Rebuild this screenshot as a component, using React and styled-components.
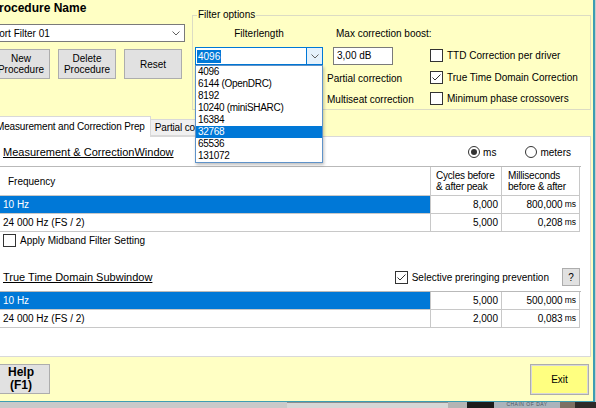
import React from 'react'
import styled, { createGlobalStyle } from 'styled-components'

const YELLOW = '#ffffc4'
const BLUE = '#0078d7'

const GlobalStyle = createGlobalStyle`
  html, body { margin: 0; padding: 0; }
  body {
    width: 596px;
    height: 408px;
    overflow: hidden;
    background: #c9c9c9;
    font-family: "Liberation Sans", Arial, sans-serif;
    font-size: 10px;
    color: #000;
  }
  #root { width: 596px; height: 408px; overflow: hidden; }
`

const Window = styled.div`
  box-sizing: border-box;
  width: 604px;
  height: 402px;
  margin-left: -9px;
  background: ${YELLOW};
  border-right: 2px solid #3d9db3;
  border-bottom: 1px solid #3d9db3;
  display: flex;
  flex-direction: column;
`

const Top = styled.div`
  display: flex;
  height: 116px;
  flex-shrink: 0;
`

const LeftCol = styled.div`
  width: 201px;
  flex-shrink: 0;
  display: flex;
  flex-direction: column;
`

const Title = styled.div`
  margin-top: 1px;
  font-size: 12px;
  font-weight: bold;
  line-height: 14px;
  white-space: nowrap;
`

const Combo = styled.div`
  position: relative;
  box-sizing: border-box;
  display: flex;
  align-items: center;
  flex-shrink: 0;
  height: 18px;
  width: ${p => p.$w}px;
  margin-left: ${p => p.$ml || 0}px;
  margin-top: ${p => p.$mt || 0}px;
  background: #fff;
  border: 1px solid ${p => (p.$focus ? BLUE : '#7a7a7a')};
`

const ComboText = styled.span`
  padding-left: 3px;
  white-space: nowrap;
`

const Selected = styled.span`
  margin-left: 1px;
  padding: 0 1px;
  line-height: 13px;
  background: ${BLUE};
  color: #fff;
`

const Chevron = styled.span`
  margin-left: auto;
  width: ${p => (p.$btn ? 15 : 17)}px;
  height: 100%;
  display: flex;
  align-items: center;
  justify-content: center;
  background: ${p => (p.$btn ? '#e5f1fb' : 'transparent')};
  border-left: 1px solid ${p => (p.$btn ? BLUE : 'transparent')};
`

const DropList = styled.div`
  position: absolute;
  z-index: 10;
  top: calc(100% + 1px);
  left: -1px;
  box-sizing: border-box;
  width: 128px;
  background: #fff;
  border: 1px solid #5f93c9;
  box-shadow: 1px 2px 3px rgba(0, 0, 0, 0.25);
`

const DropItem = styled.div`
  height: 12px;
  line-height: 12px;
  padding-left: 2px;
  font-size: 10px;
  letter-spacing: -0.3px;
  white-space: nowrap;
  background: ${p => (p.$active ? BLUE : 'transparent')};
  color: ${p => (p.$active ? '#fff' : '#000')};
`

const ButtonRow = styled.div`
  display: flex;
  gap: 8px;
  margin-top: 7px;
  margin-left: 1px;
`

const Button = styled.button`
  box-sizing: border-box;
  width: ${p => p.$w || 58}px;
  height: ${p => p.$h || 30}px;
  padding: 0;
  font-family: inherit;
  font-size: ${p => (p.$bold ? 12 : 10)}px;
  font-weight: ${p => (p.$bold ? 'bold' : 'normal')};
  line-height: ${p => (p.$bold ? 13 : 11)}px;
  color: #000;
  background: ${p => p.$bg || '#e1e1e1'};
  border: 1px solid #adadad;
  box-shadow: ${p => (p.$focus ? 'inset 0 0 0 1px #d8d8d8' : 'none')};
  text-align: center;
`

const Group = styled.fieldset`
  box-sizing: border-box;
  margin: 9px 0 0 0;
  padding: 0 4px 2px 2px;
  width: 399px;
  min-inline-size: 0;
  border: 1px solid #dcdcc4;
  align-self: flex-start;
`

const Legend = styled.legend`
  margin-left: 2px;
  padding: 0 1px;
  font-size: 10px;
  line-height: 12px;
`

const GroupBody = styled.div`
  display: flex;
  margin-top: 7px;
`

const Col = styled.div`
  display: flex;
  flex-direction: column;
  width: ${p => (p.$w ? `${p.$w}px` : 'auto')};
  padding-top: ${p => p.$pt || 0}px;
  flex-shrink: 0;
`

const Label = styled.div`
  height: 12px;
  line-height: 12px;
  white-space: nowrap;
  text-align: ${p => (p.$center ? 'center' : 'left')};
  margin-left: ${p => p.$ml || 0}px;
`

const TextBox = styled.div`
  box-sizing: border-box;
  width: 60px;
  height: 18px;
  margin-top: 7px;
  margin-left: 10px;
  padding-left: 3px;
  line-height: 16px;
  background: #fff;
  border: 1px solid #7a7a7a;
`

const CheckRow = styled.div`
  display: flex;
  align-items: center;
  gap: 4px;
  height: ${p => p.$h || 16}px;
  margin-top: ${p => p.$mt || 0}px;
  margin-left: ${p => (p.$auto ? 'auto' : `${p.$ml || 0}px`)};
  white-space: nowrap;
`

const Box = styled.span`
  box-sizing: border-box;
  width: 13px;
  height: 13px;
  flex-shrink: 0;
  display: flex;
  background: #fff;
  border: 1px solid #333;
`

const Circle = styled.span`
  box-sizing: border-box;
  width: 12px;
  height: 12px;
  flex-shrink: 0;
  display: flex;
  align-items: center;
  justify-content: center;
  border-radius: 50%;
  background: #fff;
  border: 1px solid #333;
  &::after {
    content: '';
    display: ${p => (p.$on ? 'block' : 'none')};
    width: 6px;
    height: 6px;
    border-radius: 50%;
    background: #333;
  }
`

const TabStrip = styled.div`
  position: relative;
  z-index: 1;
  display: flex;
  align-items: flex-end;
  height: 20px;
  flex-shrink: 0;
`

const Tab = styled.div`
  box-sizing: border-box;
  height: ${p => (p.$active ? 21 : 17)}px;
  margin-bottom: ${p => (p.$active ? -1 : 0)}px;
  padding: 0 5px 0 4px;
  line-height: ${p => (p.$active ? 19 : 16)}px;
  letter-spacing: -0.15px;
  white-space: nowrap;
  background: ${p => (p.$active ? '#fff' : '#f0f0f0')};
  border: 1px solid #d9d9d9;
  border-bottom: ${p => (p.$active ? 'none' : '1px solid #d9d9d9')};
  border-left: ${p => (p.$active ? '1px solid #d9d9d9' : 'none')};
`

const Panel = styled.div`
  box-sizing: border-box;
  width: 600px;
  height: 221px;
  flex-shrink: 0;
  padding-left: 8px;
  display: flex;
  flex-direction: column;
  background: #fff;
  border: 1px solid #d9d9d9;
`

const SectionRow = styled.div`
  display: flex;
  align-items: center;
  height: ${p => p.$h}px;
  margin-top: ${p => p.$mt}px;
  padding-right: ${p => p.$pr}px;
`

const SectionTitle = styled.span`
  margin-left: 3px;
  font-size: 11px;
  text-decoration: underline;
  white-space: nowrap;
`

const RadioGroup = styled.div`
  margin-left: auto;
  display: flex;
  gap: 29px;
`

const RadioItem = styled.div`
  display: flex;
  align-items: center;
  gap: 3px;
`

const HelpBtn = styled.button`
  margin-left: 13px;
  box-sizing: border-box;
  width: 18px;
  height: 18px;
  padding: 0;
  font-family: inherit;
  font-size: 10px;
  background: #e1e1e1;
  border: 1px solid #adadad;
`

const Grid = styled.div`
  display: grid;
  grid-template-columns: 431px 71px 78px;
  width: 581px;
  margin-left: -1px;
  margin-top: ${p => p.$mt}px;
  border-top: 1px solid #b9b9b9;
  border-left: 1px solid #b9b9b9;
`

const Cell = styled.div`
  box-sizing: border-box;
  height: ${p => p.$h || 18}px;
  display: flex;
  align-items: center;
  justify-content: ${p => (p.$right ? 'flex-end' : 'flex-start')};
  padding: 0 ${p => (p.$right ? 3 : 0)}px 0 ${p => p.$pl ?? 3}px;
  line-height: 11px;
  white-space: nowrap;
  background: ${p => (p.$sel ? BLUE : '#fff')};
  color: ${p => (p.$sel ? '#fff' : '#000')};
  border-right: 1px solid #c8c8c8;
  border-bottom: 1px solid #c8c8c8;
`

const HeadText = styled.div`
  letter-spacing: -0.2px;
`

const Unit = styled.span`
  margin-left: 2px;
  font-size: 8.5px;
`

const Footer = styled.div`
  flex: 1;
  display: flex;
  justify-content: space-between;
  align-items: flex-start;
  padding: 7px 4px 0 1px;
`

const Desktop = styled.div`
  display: flex;
  height: 6px;
  overflow: hidden;
`

const Strip = styled.div`
  box-sizing: border-box;
  width: ${p => p.$w}px;
  flex-shrink: 0;
  background: ${p => p.$bg};
  border-top: ${p => (p.$line ? '1px solid #8e8e8e' : 'none')};
  font-size: 5px;
  line-height: 5px;
  letter-spacing: 0.5px;
  color: #4b5560;
  text-align: center;
  overflow: hidden;
`

function Check({ on }) {
  return (
    <Box>
      {on && (
        <svg width="11" height="11" viewBox="0 0 11 11">
          <polyline points="1.5,5.5 4,8 9.5,2.5" fill="none" stroke="#333" strokeWidth="1" />
        </svg>
      )}
    </Box>
  )
}

function ChevronIcon() {
  return (
    <svg width="8" height="5" viewBox="0 0 8 5">
      <polyline points="0.5,0.5 4,4 7.5,0.5" fill="none" stroke="#606060" strokeWidth="1" />
    </svg>
  )
}

const filterLengths = ['4096', '6144 (OpenDRC)', '8192', '10240 (miniSHARC)', '16384', '32768', '65536', '131072']

const mainRows = [
  { freq: '10 Hz', cycles: '8,000', ms: '800,000', sel: true },
  { freq: '24 000 Hz (FS / 2)', cycles: '5,000', ms: '0,208' },
]

const subRows = [
  { freq: '10 Hz', cycles: '5,000', ms: '500,000', sel: true },
  { freq: '24 000 Hz (FS / 2)', cycles: '2,000', ms: '0,083' },
]

function DataRows({ rows }) {
  return rows.map(r => (
    <React.Fragment key={r.freq}>
      <Cell $sel={r.sel}>{r.freq}</Cell>
      <Cell $right>{r.cycles}</Cell>
      <Cell $right>
        {r.ms}
        <Unit>ms</Unit>
      </Cell>
    </React.Fragment>
  ))
}

export default function App() {
  return (
    <>
      <GlobalStyle />
      <Window>
        <Top>
          <LeftCol>
            <Title>Procedure Name</Title>
            <Combo $w={202} $ml={-8} $mt={9}>
              <ComboText>Short Filter 01</ComboText>
              <Chevron>
                <ChevronIcon />
              </Chevron>
            </Combo>
            <ButtonRow>
              <Button>
                New
                <br />
                Procedure
              </Button>
              <Button>
                Delete
                <br />
                Procedure
              </Button>
              <Button>Reset</Button>
            </ButtonRow>
          </LeftCol>

          <Group>
            <Legend>Filter options</Legend>
            <GroupBody>
              <Col $w={128}>
                <Label $center>Filterlength</Label>
                <Combo $w={128} $mt={7} $focus>
                  <Selected>4096</Selected>
                  <Chevron $btn>
                    <ChevronIcon />
                  </Chevron>
                  <DropList>
                    {filterLengths.map(f => (
                      <DropItem key={f} $active={f === '32768'}>
                        {f}
                      </DropItem>
                    ))}
                  </DropList>
                </Combo>
              </Col>
              <Col $w={107}>
                <Label $ml={13}>Max correction boost:</Label>
                <TextBox>3,00 dB</TextBox>
                <CheckRow $mt={5} $ml={-13}>
                  <Check />
                  Partial correction
                </CheckRow>
                <CheckRow $mt={5} $ml={-13}>
                  <Check />
                  Multiseat correction
                </CheckRow>
              </Col>
              <Col $pt={19}>
                <CheckRow $h={17}>
                  <Check />
                  TTD Correction per driver
                </CheckRow>
                <CheckRow $mt={5}>
                  <Check on />
                  True Time Domain Correction
                </CheckRow>
                <CheckRow $mt={5}>
                  <Check />
                  Minimum phase crossovers
                </CheckRow>
              </Col>
            </GroupBody>
          </Group>
        </Top>

        <TabStrip>
          <Tab $active>Measurement and Correction Prep</Tab>
          <Tab>Partial correction</Tab>
        </TabStrip>
        <Panel>
          <SectionRow $h={16} $mt={7} $pr={19}>
            <SectionTitle>Measurement &amp; CorrectionWindow</SectionTitle>
            <RadioGroup>
              <RadioItem>
                <Circle $on />
                ms
              </RadioItem>
              <RadioItem>
                <Circle />
                meters
              </RadioItem>
            </RadioGroup>
          </SectionRow>

          <Grid $mt={6}>
            <Cell $h={29} $pl={8}>
              Frequency
            </Cell>
            <Cell $h={29} $pl={5}>
              <HeadText>
                Cycles before
                <br />& after peak
              </HeadText>
            </Cell>
            <Cell $h={29} $pl={6}>
              <HeadText>
                Milliseconds
                <br />
                before &amp; after
              </HeadText>
            </Cell>
            <DataRows rows={mainRows} />
          </Grid>

          <CheckRow $mt={0} $ml={3}>
            <Check />
            Apply Midband Filter Setting
          </CheckRow>

          <SectionRow $h={18} $mt={20} $pr={10}>
            <SectionTitle>True Time Domain Subwindow</SectionTitle>
            <CheckRow $auto>
              <Check on />
              Selective preringing prevention
            </CheckRow>
            <HelpBtn>?</HelpBtn>
          </SectionRow>

          <Grid $mt={5}>
            <DataRows rows={subRows} />
          </Grid>
        </Panel>

        <Footer>
          <Button $bold>
            Help
            <br />
            (F1)
          </Button>
          <Button $w={59} $h={31} $bg="#ffff80" $focus>
            Exit
          </Button>
        </Footer>
      </Window>
      <Desktop>
        <Strip $w={287} $bg="#c9c9c9" />
        <Strip $w={161} $bg="#d6d6d6" $line />
        <Strip $w={19} $bg="#b4b4b4" />
        <Strip $w={27} $bg="#1c1c1c" />
        <Strip $w={66} $bg="#aab3bb">CHAIN OF DAY</Strip>
        <Strip $w={15} $bg="#7d7064" />
        <Strip $w={21} $bg="#2e2a28" />
      </Desktop>
    </>
  )
}
